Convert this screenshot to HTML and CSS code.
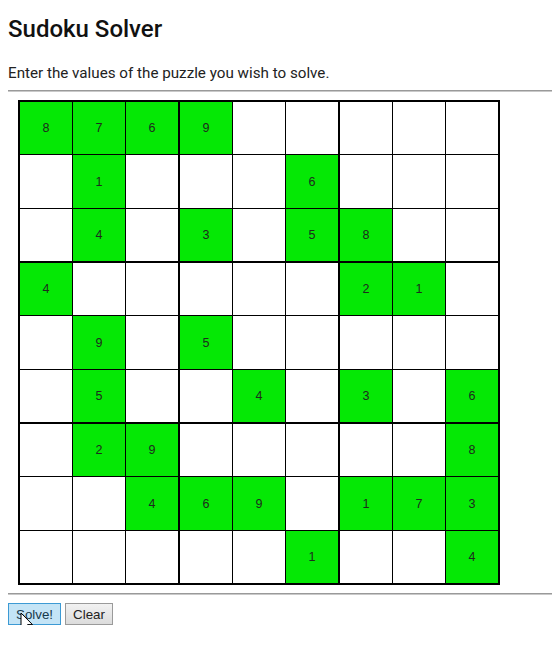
FILE: index.html
```html
<!DOCTYPE html>
<html>
<head>
<meta charset="utf-8">
<title>Sudoku Solver</title>
<link rel="stylesheet" href="styles.css">
</head>
<body>
<h1 class="title">Sudoku Solver</h1>
<p class="intro">Enter the values of the puzzle you wish to solve.</p>
<hr class="rule">
<div class="board">
  <div class="box">
    <div class="cell given">8</div><div class="cell given">7</div><div class="cell given">6</div>
    <div class="cell"></div><div class="cell given">1</div><div class="cell"></div>
    <div class="cell"></div><div class="cell given">4</div><div class="cell"></div>
  </div>
  <div class="box">
    <div class="cell given">9</div><div class="cell"></div><div class="cell"></div>
    <div class="cell"></div><div class="cell"></div><div class="cell given">6</div>
    <div class="cell given">3</div><div class="cell"></div><div class="cell given">5</div>
  </div>
  <div class="box">
    <div class="cell"></div><div class="cell"></div><div class="cell"></div>
    <div class="cell"></div><div class="cell"></div><div class="cell"></div>
    <div class="cell given">8</div><div class="cell"></div><div class="cell"></div>
  </div>
  <div class="box">
    <div class="cell given">4</div><div class="cell"></div><div class="cell"></div>
    <div class="cell"></div><div class="cell given">9</div><div class="cell"></div>
    <div class="cell"></div><div class="cell given">5</div><div class="cell"></div>
  </div>
  <div class="box">
    <div class="cell"></div><div class="cell"></div><div class="cell"></div>
    <div class="cell given">5</div><div class="cell"></div><div class="cell"></div>
    <div class="cell"></div><div class="cell given">4</div><div class="cell"></div>
  </div>
  <div class="box">
    <div class="cell given">2</div><div class="cell given">1</div><div class="cell"></div>
    <div class="cell"></div><div class="cell"></div><div class="cell"></div>
    <div class="cell given">3</div><div class="cell"></div><div class="cell given">6</div>
  </div>
  <div class="box">
    <div class="cell"></div><div class="cell given">2</div><div class="cell given">9</div>
    <div class="cell"></div><div class="cell"></div><div class="cell given">4</div>
    <div class="cell"></div><div class="cell"></div><div class="cell"></div>
  </div>
  <div class="box">
    <div class="cell"></div><div class="cell"></div><div class="cell"></div>
    <div class="cell given">6</div><div class="cell given">9</div><div class="cell"></div>
    <div class="cell"></div><div class="cell"></div><div class="cell given">1</div>
  </div>
  <div class="box">
    <div class="cell"></div><div class="cell"></div><div class="cell given">8</div>
    <div class="cell given">1</div><div class="cell given">7</div><div class="cell given">3</div>
    <div class="cell"></div><div class="cell"></div><div class="cell given">4</div>
  </div>
</div>
<hr class="rule rule-bottom">
<div class="actions">
  <button class="btn btn-solve" type="button">Solve!</button>
  <button class="btn" type="button">Clear</button>
  <svg class="cursor" width="14" height="22" viewBox="0 0 14 22"><path d="M1 1 L1 17 L5 13.5 L8 20.5 L10.5 19.5 L7.6 12.6 L12.5 12.6 Z" fill="#fff" stroke="#000" stroke-width="1" stroke-linejoin="miter"/></svg>
</div>
</body>
</html>
```

FILE: styles.css
```css
html, body {
  background: #fff;
}
body {
  margin: 8px 0 8px 8px;
  color: #111;
  font-family: Roboto, "Liberation Sans", sans-serif;
}
.title {
  margin: 7px 0 0;
  font-size: 24px;
  font-weight: 500;
  line-height: 28px;
  color: #111;
}
.intro {
  margin: 21px 0 0;
  font-size: 15.2px;
  line-height: 18px;
  color: #222;
}
.rule {
  margin: 8px 0 0;
  height: 0;
  border: none;
  border-top: 1px solid #9a9a9a;
  border-bottom: 1px solid #c9c9c9;
}
.board {
  margin: 8px 0 0 10px;
  width: 478px;
  padding: 2px;
  background: #000;
  display: grid;
  grid-template-columns: repeat(3, 158px);
  gap: 2px;
}
.box {
  display: grid;
  grid-template-columns: repeat(3, 52px);
  grid-template-rows: 52px 53px 52px;
  gap: 1px;
}
.cell {
  background: #fff;
  display: flex;
  align-items: center;
  justify-content: center;
  font-family: "Liberation Sans", Arial, sans-serif;
  font-size: 12.5px;
  color: #1e2a1e;
}
.cell.given {
  background: #05e805;
}
.rule-bottom {
  margin-top: 8px;
}
.actions {
  position: relative;
  margin-top: 8px;
  display: flex;
  gap: 4px;
}
.btn {
  height: 22px;
  margin: 0;
  padding: 0 7px;
  font-family: "Liberation Sans", Arial, sans-serif;
  font-size: 13.33px;
  color: #222;
  background: linear-gradient(#f2f2f2, #dcdcdc);
  border: 1px solid #9a9a9a;
  border-radius: 0;
}
.btn-solve {
  background: #c4e4f6;
  border-color: #3c9ad4;
  color: #17384a;
}
.cursor {
  position: absolute;
  left: 12px;
  top: 9px;
}
```
